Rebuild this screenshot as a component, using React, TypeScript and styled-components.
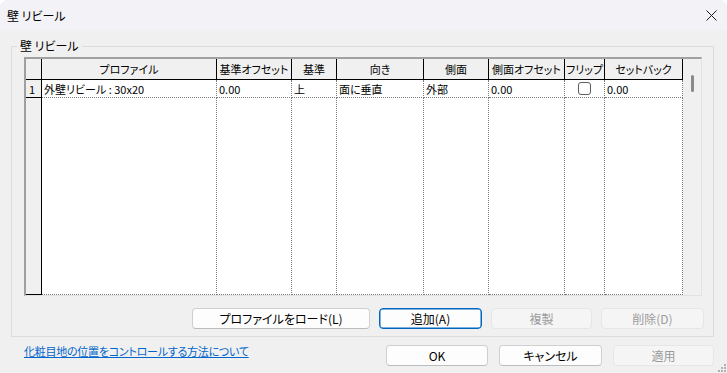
import React from "react";
import styled, { createGlobalStyle, css } from "styled-components";

const FONT = `"Noto Sans CJK JP", "Noto Sans", sans-serif`;

const GlobalStyle = createGlobalStyle`
  html, body { margin: 0; padding: 0; background: #ffffff; }
  body { font-family: ${FONT}; }
  * { box-sizing: border-box; }
`;

const Window = styled.div`
  position: relative;
  width: 727px;
  height: 373px;
  display: flex;
  flex-direction: column;
  background: #f0f0f0;
  border-radius: 8px 8px 0 0;
  overflow: hidden;
  font-family: ${FONT};
  font-feature-settings: "palt";
  color: #000;
`;

const TitleBar = styled.div`
  flex: none;
  height: 30px;
  display: flex;
  align-items: center;
  justify-content: space-between;
  padding: 0 6px 0 7px;
  background: #f3f2f7;
  font-size: 12px;
`;

const CloseButton = styled.div`
  width: 20px;
  height: 20px;
  display: flex;
  align-items: center;
  justify-content: center;
`;

const Body = styled.div`
  flex: 1;
  display: flex;
  flex-direction: column;
  padding: 8px 13px 0 11px;
`;

const Group = styled.fieldset`
  margin: 0;
  min-width: 0;
  border: 1px solid #dcdcdc;
  padding: 3px 11px 7px 12px;
`;

const Legend = styled.legend`
  margin-left: -7px;
  padding: 0 3px;
  font-size: 12px;
  line-height: 16px;
`;

const GroupInner = styled.div`
  display: flex;
  flex-direction: column;
  gap: 12px;
`;

const GridFrame = styled.div`
  width: 678px;
  height: 239px;
  display: flex;
  border-style: solid;
  border-width: 2px 1px 1px 2px;
  border-color: #a0a0a0 #e3e3e3 #e3e3e3 #a0a0a0;
  background: #f0f0f0;
`;

const Grid = styled.div`
  width: 657px;
  display: grid;
  grid-template-columns: 16px 175px 75px 45px 87px 65px 76px 40px 78px;
  grid-template-rows: 21px 18px 1fr;
  background: #ffffff;
  font-size: 11px;
`;

const HeaderCell = styled.div`
  display: flex;
  align-items: center;
  justify-content: center;
  background: #f0f0f0;
  border-right: 1px solid #000;
  border-bottom: 1px solid #000;
  white-space: nowrap;
  overflow: hidden;
`;

const RowHead = styled.div`
  display: flex;
  align-items: center;
  padding-left: 3px;
  background: #f0f0f0;
  border-right: 1px solid #000;
  border-bottom: 1px solid #000;
`;

const Cell = styled.div<{ $center?: boolean }>`
  display: flex;
  align-items: center;
  justify-content: ${(p) => (p.$center ? "center" : "flex-start")};
  padding-left: ${(p) => (p.$center ? "0" : "2px")};
  border-right: 1px dotted #7a7a7a;
  border-bottom: 1px dotted #7a7a7a;
  white-space: nowrap;
  overflow: hidden;
`;

const CheckBox = styled.span`
  width: 13px;
  height: 13px;
  border: 1px solid #5c5c5c;
  border-radius: 3px;
  background: #ffffff;
`;

const ScrollTrack = styled.div`
  width: 18px;
  display: flex;
  justify-content: center;
  padding-top: 16px;
`;

const ScrollThumb = styled.div`
  width: 3px;
  height: 17px;
  border-radius: 2px;
  background: #8a8a8a;
`;

const ButtonRow = styled.div`
  display: flex;
  justify-content: flex-end;
  gap: 9px;
  margin-right: -2px;
`;

type Variant = "normal" | "default" | "disabled";

const Button = styled.button<{ $variant?: Variant; $w: number }>`
  width: ${(p) => p.$w}px;
  height: 21px;
  padding: 0;
  font-family: ${FONT};
  font-feature-settings: "palt";
  font-size: 12px;
  line-height: 1;
  border-radius: 4px;
  border: 1px solid #d0d0d0;
  border-bottom-color: #bcbcbc;
  background: #fdfdfd;
  color: #000;
  ${(p) =>
    p.$variant === "default" &&
    css`
      border: 1px solid #0067c0;
      box-shadow: inset 0 0 0 0.5px #0067c0;
    `}
  ${(p) =>
    p.$variant === "disabled" &&
    css`
      border: 1px solid #e6e6e6;
      background: #f5f5f5;
      color: #9b9b9b;
    `}
`;

const Footer = styled.div`
  display: flex;
  align-items: flex-start;
  padding: 8px 0 0 13px;
`;

const HelpLink = styled.a`
  flex: 1;
  font-size: 11px;
  line-height: 13px;
  letter-spacing: -0.25px;
  color: #0066cc;
  text-decoration: underline;
  cursor: pointer;
`;

const FooterButtons = styled.div`
  display: flex;
  gap: 11px;
`;

const Grip = styled.svg`
  position: absolute;
  right: 1px;
  bottom: 1px;
`;

const headers = [
  "プロファイル",
  "基準オフセット",
  "基準",
  "向き",
  "側面",
  "側面オフセット",
  "フリップ",
  "セットバック",
];

const row = ["外壁リビール : 30x20", "0.00", "上", "面に垂直", "外部", "0.00", null, "0.00"];

export default function App() {
  return (
    <>
      <GlobalStyle />
      <Window>
        <TitleBar>
          <span>壁 リビール</span>
          <CloseButton>
            <svg width="11" height="11" viewBox="0 0 11 11">
              <path d="M0.5 0.5 L10.5 10.5 M10.5 0.5 L0.5 10.5" stroke="#1b1b1b" strokeWidth="1" />
            </svg>
          </CloseButton>
        </TitleBar>
        <Body>
          <Group>
            <Legend>壁 リビール</Legend>
            <GroupInner>
              <GridFrame>
                <Grid>
                  <HeaderCell />
                  {headers.map((h) => (
                    <HeaderCell key={h}>{h}</HeaderCell>
                  ))}
                  <RowHead>1</RowHead>
                  {row.map((v, i) =>
                    v === null ? (
                      <Cell key={i} $center>
                        <CheckBox />
                      </Cell>
                    ) : (
                      <Cell key={i}>{v}</Cell>
                    )
                  )}
                  <RowHead />
                  {headers.map((h) => (
                    <Cell key={"f" + h} />
                  ))}
                </Grid>
                <ScrollTrack>
                  <ScrollThumb />
                </ScrollTrack>
              </GridFrame>
              <ButtonRow>
                <Button $w={178}>プロファイルをロード(L)</Button>
                <Button $w={103} $variant="default">追加(A)</Button>
                <Button $w={101} $variant="disabled">複製</Button>
                <Button $w={103} $variant="disabled">削除(D)</Button>
              </ButtonRow>
            </GroupInner>
          </Group>
          <Footer>
            <HelpLink>化粧目地の位置をコントロールする方法について</HelpLink>
            <FooterButtons>
              <Button $w={102}>OK</Button>
              <Button $w={103}>キャンセル</Button>
              <Button $w={101} $variant="disabled">適用</Button>
            </FooterButtons>
          </Footer>
        </Body>
        <Grip width="8" height="8" viewBox="0 0 8 8">
          <rect x="6" y="0" width="2" height="2" fill="#b0b0b0" />
          <rect x="3" y="3" width="2" height="2" fill="#b0b0b0" />
          <rect x="6" y="3" width="2" height="2" fill="#b0b0b0" />
          <rect x="0" y="6" width="2" height="2" fill="#b0b0b0" />
          <rect x="3" y="6" width="2" height="2" fill="#b0b0b0" />
          <rect x="6" y="6" width="2" height="2" fill="#b0b0b0" />
        </Grip>
      </Window>
    </>
  );
}
